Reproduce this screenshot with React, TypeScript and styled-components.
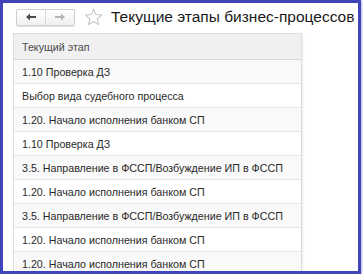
import styled, { createGlobalStyle } from "styled-components";

const Global = createGlobalStyle`
  html, body {
    margin: 0;
    padding: 0;
    background: #ffffff;
    font-family: "Liberation Sans", Arial, sans-serif;
  }
`;

const Frame = styled.div`
  box-sizing: border-box;
  width: 361px;
  height: 274px;
  border: 3px solid #3f44b9;
  box-shadow: 1px 1px 2px rgba(80, 90, 200, 0.45);
  overflow: hidden;
  padding: 5px 0 0 10px;
  display: flex;
  flex-direction: column;
`;

const Toolbar = styled.div`
  display: flex;
  align-items: center;
  height: 22px;
`;

const NavGroup = styled.div`
  display: flex;
  margin-left: 3px;
  border: 1px solid #cfcfcf;
  border-radius: 2px;
  background: linear-gradient(#ffffff, #f0f0f0);
  box-shadow: 0 1px 1px rgba(0, 0, 0, 0.12);
`;

const NavButton = styled.div<{ $last?: boolean }>`
  width: 28px;
  height: 15px;
  display: flex;
  align-items: center;
  justify-content: center;
  border-left: ${(p) => (p.$last ? "1px solid #d8d8d8" : "none")};
`;

const StarBox = styled.div`
  margin-left: 9px;
  display: flex;
  align-items: center;
`;

const Title = styled.h1`
  margin: 0 0 0 8px;
  font-size: 15.5px;
  font-weight: normal;
  color: #1a1a1a;
  white-space: nowrap;
`;

const Table = styled.div`
  margin-top: 7px;
  width: 287px;
  border: 1px solid #dcdcdc;
  box-shadow: 1px 1px 2px rgba(0, 0, 0, 0.08);
  display: flex;
  flex-direction: column;
`;

const HeaderCell = styled.div`
  height: 25px;
  display: flex;
  align-items: center;
  padding-left: 8px;
  background: #f0f0f0;
  border-bottom: 1px solid #d6d6d6;
  font-size: 10.7px;
  color: #4a4a4a;
`;

const Row = styled.div<{ $alt: boolean }>`
  height: 23px;
  flex: none;
  display: flex;
  align-items: center;
  padding-left: 8px;
  background: ${(p) => (p.$alt ? "#f9f9f9" : "#ffffff")};
  border-bottom: 1px solid #e6e6e6;
  font-size: 10.7px;
  color: #2a2a2a;
  white-space: nowrap;
`;

const stages = [
  "1.10 Проверка ДЗ",
  "Выбор вида судебного процесса",
  "1.20. Начало исполнения банком СП",
  "1.10 Проверка ДЗ",
  "3.5. Направление в ФССП/Возбуждение ИП в ФССП",
  "1.20. Начало исполнения банком СП",
  "3.5. Направление в ФССП/Возбуждение ИП в ФССП",
  "1.20. Начало исполнения банком СП",
  "1.20. Начало исполнения банком СП",
];

const ArrowLeft = ({ color }: { color: string }) => (
  <svg width="12" height="10" viewBox="0 0 12 10">
    <path d="M1 5 L5 1.5 L5 4 L11 4 L11 6 L5 6 L5 8.5 Z" fill={color} />
  </svg>
);

const ArrowRight = ({ color }: { color: string }) => (
  <svg width="12" height="10" viewBox="0 0 12 10">
    <path d="M11 5 L7 1.5 L7 4 L1 4 L1 6 L7 6 L7 8.5 Z" fill={color} />
  </svg>
);

const Star = () => (
  <svg width="19" height="18" viewBox="0 0 24 23">
    <path
      d="M12 1.5 L14.9 8.4 L22.3 9 L16.7 13.9 L18.4 21.2 L12 17.3 L5.6 21.2 L7.3 13.9 L1.7 9 L9.1 8.4 Z"
      fill="none"
      stroke="#c4c4c4"
      strokeWidth="1.3"
      strokeLinejoin="round"
    />
  </svg>
);

const App = () => {
  return (
    <>
      <Global />
      <Frame>
        <Toolbar>
          <NavGroup>
            <NavButton>
              <ArrowLeft color="#4a4a4a" />
            </NavButton>
            <NavButton $last>
              <ArrowRight color="#b4b4b4" />
            </NavButton>
          </NavGroup>
          <StarBox>
            <Star />
          </StarBox>
          <Title>Текущие этапы бизнес-процессов</Title>
        </Toolbar>
        <Table>
          <HeaderCell>Текущий этап</HeaderCell>
          {stages.map((s, i) => (
            <Row key={i} $alt={i % 2 === 0}>
              {s}
            </Row>
          ))}
        </Table>
      </Frame>
    </>
  );
};

export default App;
